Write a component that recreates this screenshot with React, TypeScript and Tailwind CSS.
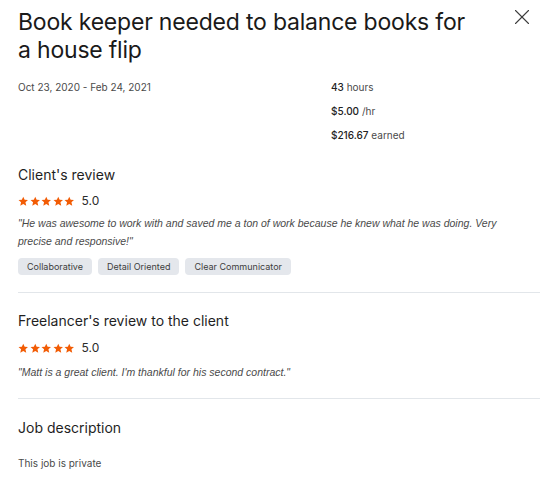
import React from "react"
import { X } from "lucide-react"

const font = { fontFamily: "Inter, 'Helvetica Neue', Arial, sans-serif" }
const quoteFont = { fontFamily: "'Liberation Sans', Arial, sans-serif" }

function Stars() {
    return (
        <div className="flex items-center">
            <div className="flex gap-[1px]">
                {[0, 1, 2, 3, 4].map((i) => (
                    <svg key={i} viewBox="0 0 24 24" className="h-[10.5px] w-[10.5px] fill-[#f25c05]">
                        <path d="M12 1.5l3.2 7.1 7.6.7-5.8 5.1 1.8 7.6L12 18l-6.8 4 1.8-7.6L1.2 9.3l7.6-.7z" />
                    </svg>
                ))}
            </div>
            <span className="ml-[7px] text-[12px] text-[#2b2b2b]">5.0</span>
        </div>
    )
}

function Tag({ label }: { label: string }) {
    return (
        <span className="inline-flex h-[17px] items-center rounded-[4px] bg-[#e4e7ec] px-[9px] text-[9px] text-[#3d3d3d]">
            {label}
        </span>
    )
}

export default function App() {
    return (
        <div className="min-h-[477px] bg-white pl-[18px] text-[#1d1d1d]" style={font}>
            <div className="flex items-start justify-between pr-[5px] pt-[8px]">
                <h1 className="w-[455px] text-[23px] leading-[28px] tracking-[-0.2px] text-[#1a1a1a]">
                    Book keeper needed to balance books for a house flip
                </h1>
                <button className="-mt-[4px] text-[#3d3d3d]">
                    <X className="h-[26px] w-[26px]" strokeWidth={1} />
                </button>
            </div>

            <div className="mt-[11px] flex text-[10px] text-[#4a4a4a]">
                <div className="w-[313px] leading-[24px]">Oct 23, 2020 - Feb 24, 2021</div>
                <div className="flex flex-col leading-[24px]">
                    <div>
                        <span className="font-medium text-[#222]">43</span> hours
                    </div>
                    <div>
                        <span className="font-medium text-[#222]">$5.00</span> /hr
                    </div>
                    <div>
                        <span className="font-medium text-[#222]">$216.67</span> earned
                    </div>
                </div>
            </div>

            <section className="border-b border-[#e2e6ea] pb-[17px] pt-[18px]">
                <h2 className="text-[14px] leading-[20px] text-[#1f1f1f]">Client's review</h2>
                <div className="mt-[7px]">
                    <Stars />
                </div>
                <p className="mt-[4px] w-[510px] text-[10.5px] italic leading-[18px] text-[#4a4a4a]" style={quoteFont}>
                    "He was awesome to work with and saved me a ton of work because he knew what he was doing. Very
                    precise and responsive!"
                </p>
                <div className="mt-[8px] flex gap-[6px]">
                    <Tag label="Collaborative" />
                    <Tag label="Detail Oriented" />
                    <Tag label="Clear Communicator" />
                </div>
            </section>

            <section className="border-b border-[#e2e6ea] pb-[17px] pt-[18px]">
                <h2 className="text-[14px] leading-[20px] text-[#1f1f1f]">Freelancer's review to the client</h2>
                <div className="mt-[8px]">
                    <Stars />
                </div>
                <p className="mt-[6px] text-[10.5px] italic leading-[18px] text-[#4a4a4a]" style={quoteFont}>
                    "Matt is a great client. I'm thankful for his second contract."
                </p>
            </section>

            <section className="pt-[19px]">
                <h2 className="text-[14px] leading-[20px] text-[#1f1f1f]">Job description</h2>
                <p className="mt-[18px] text-[10px] text-[#4a4a4a]">This job is private</p>
            </section>
        </div>
    )
}
